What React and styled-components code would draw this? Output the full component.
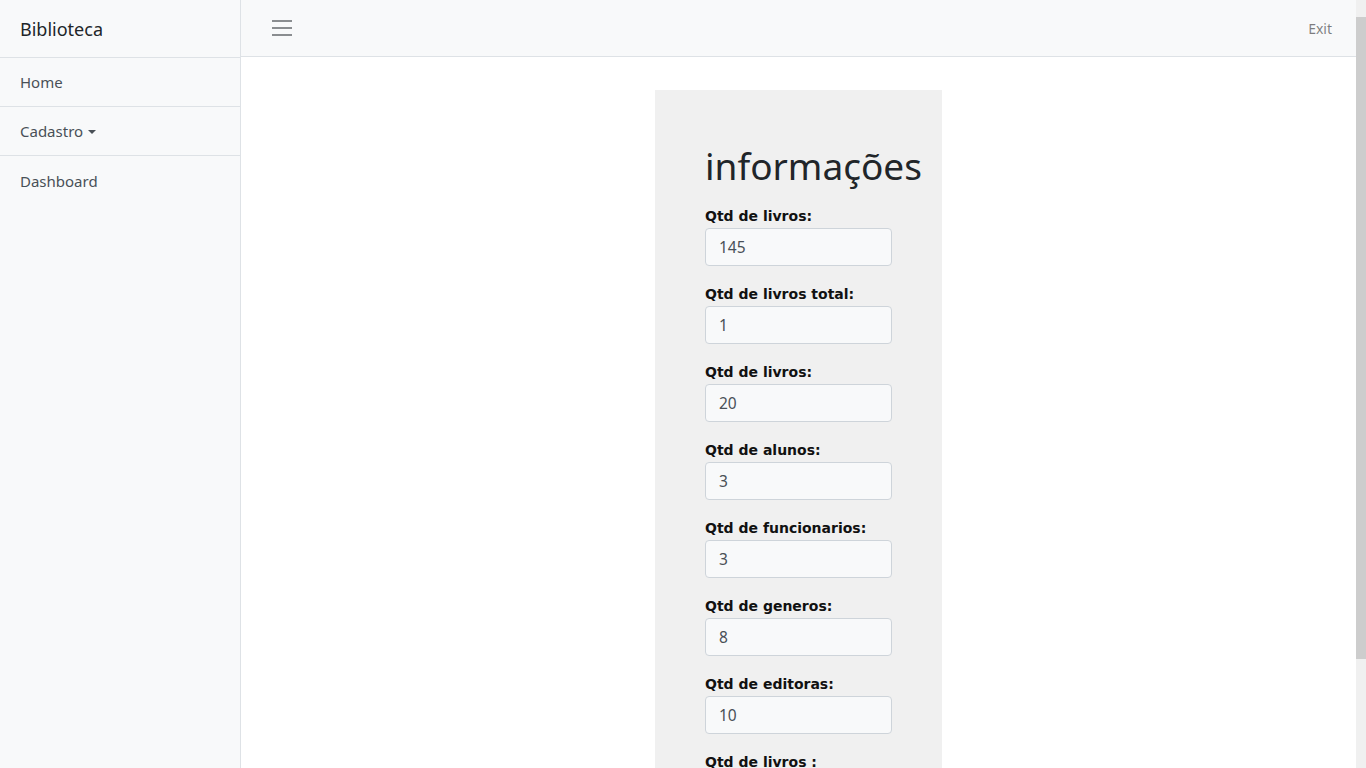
import React from 'react';
import styled, { createGlobalStyle } from 'styled-components';

const Global = createGlobalStyle`
	body {
		margin: 0;
		font-family: "Noto Sans", "Open Sans", sans-serif;
		color: #212529;
		background: #fff;
	}
	* { box-sizing: border-box; }
`;

const Wrapper = styled.div`
	display: flex;
	min-height: 100vh;
`;

const Sidebar = styled.nav`
	width: 241px;
	flex-shrink: 0;
	background: #f8f9fa;
	border-right: 1px solid #dee2e6;
	min-height: 100vh;
`;

const Brand = styled.div`
	height: 58px;
	padding: 0 20px;
	display: flex;
	align-items: center;
	font-size: 18px;
	color: #212529;
	border-bottom: 1px solid #dee2e6;
`;

const MenuItem = styled.a`
	display: flex;
	align-items: center;
	height: 49px;
	padding: 0 20px;
	font-size: 15px;
	color: #495057;
	text-decoration: none;
	border-bottom: ${p => (p.last ? 'none' : '1px solid #dee2e6')};
`;

const Caret = styled.span`
	display: inline-block;
	margin-left: 5px;
	border-top: 4.5px solid #495057;
	border-left: 4px solid transparent;
	border-right: 4px solid transparent;
	margin-top: 1px;
`;

const Main = styled.div`
	flex: 1;
	display: flex;
	flex-direction: column;
`;

const Topbar = styled.header`
	height: 57px;
	background: #f8f9fa;
	border-bottom: 1px solid #dee2e6;
	display: flex;
	align-items: center;
	justify-content: space-between;
	padding: 0 24px 0 31px;
`;

const Burger = styled.button`
	border: none;
	background: none;
	padding: 0;
	width: 20px;
	height: 16px;
	display: flex;
	flex-direction: column;
	justify-content: space-between;
	cursor: pointer;

	span {
		display: block;
		height: 2px;
		background: #8a8d90;
	}
`;

const Exit = styled.a`
	font-size: 14px;
	color: rgba(0, 0, 0, 0.5);
	text-decoration: none;
`;

const Content = styled.main`
	display: flex;
	justify-content: center;
	padding-top: 33px;
`;

const Card = styled.section`
	width: 287px;
	background: #f0f0f0;
	padding: 52px 20px 30px 50px;
`;

const Title = styled.h1`
	margin: 0 0 14px;
	font-size: 37px;
	font-weight: 400;
	line-height: 48px;
	white-space: nowrap;
	color: #212529;
`;

const Group = styled.div`
	margin-bottom: 16px;
`;

const Label = styled.label`
	display: block;
	font-family: "DejaVu Sans", sans-serif;
	font-weight: 700;
	font-size: 14px;
	line-height: 24px;
	color: #111;
`;

const Input = styled.input`
	display: block;
	width: 187px;
	height: 38px;
	padding: 0 13px;
	font-family: "Noto Sans", sans-serif;
	font-size: 15.5px;
	color: #495057;
	background: #f8f9fa;
	border: 1px solid #ced4da;
	border-radius: 4px;
	outline: none;
`;

const ScrollRail = styled.div`
	position: sticky;
	top: 0;
	width: 10px;
	height: 100vh;
	flex-shrink: 0;
	background: #f0f0f0;
	display: flex;
	flex-direction: column;
	padding: 17px 0;
`;

const ScrollThumb = styled.div`
	height: 642px;
	background: #cdcdcd;
`;

const fields = [
	['Qtd de livros:', '145'],
	['Qtd de livros total:', '1'],
	['Qtd de livros:', '20'],
	['Qtd de alunos:', '3'],
	['Qtd de funcionarios:', '3'],
	['Qtd de generos:', '8'],
	['Qtd de editoras:', '10'],
	['Qtd de livros :', '0'],
];

export default function App() {
	return (
		<Wrapper>
			<Global />
			<Sidebar>
				<Brand>Biblioteca</Brand>
				<MenuItem href="#">Home</MenuItem>
				<MenuItem href="#">
					Cadastro
					<Caret />
				</MenuItem>
				<MenuItem href="#" last>
					Dashboard
				</MenuItem>
			</Sidebar>
			<Main>
				<Topbar>
					<Burger aria-label="menu">
						<span />
						<span />
						<span />
					</Burger>
					<Exit href="#">Exit</Exit>
				</Topbar>
				<Content>
					<Card>
						<Title>informações</Title>
						{fields.map(([label, value], i) => (
							<Group key={i}>
								<Label>{label}</Label>
								<Input type="text" defaultValue={value} readOnly />
							</Group>
						))}
					</Card>
				</Content>
			</Main>
			<ScrollRail>
				<ScrollThumb />
			</ScrollRail>
		</Wrapper>
	);
}
